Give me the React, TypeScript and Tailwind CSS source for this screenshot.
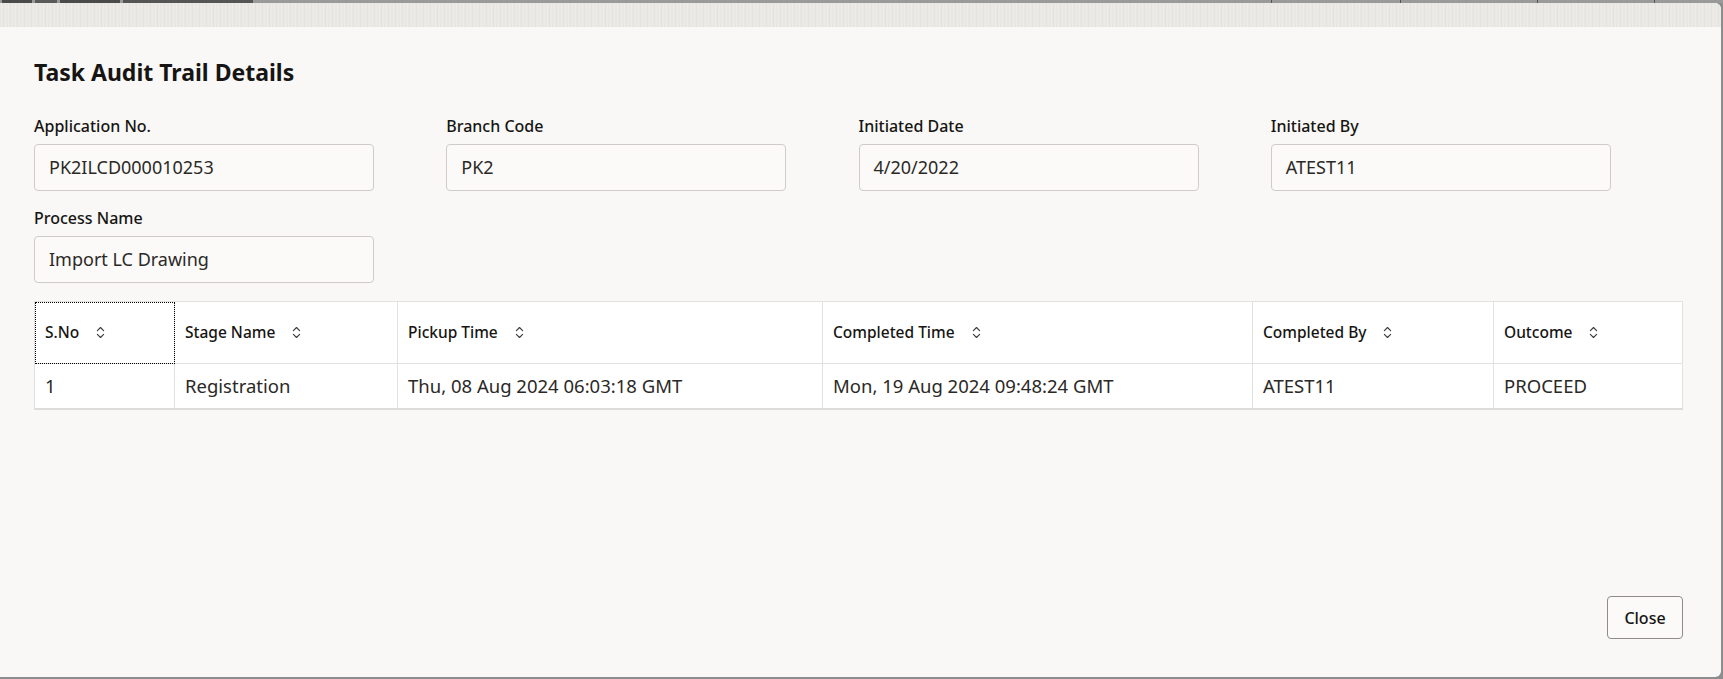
import { ChevronsUpDown } from 'lucide-react';

type Field = { label: string; value: string };

const FIELDS: Field[] = [
  { label: 'Application No.', value: 'PK2ILCD000010253' },
  { label: 'Branch Code', value: 'PK2' },
  { label: 'Initiated Date', value: '4/20/2022' },
  { label: 'Initiated By', value: 'ATEST11' },
  { label: 'Process Name', value: 'Import LC Drawing' },
];

const COLUMNS = [
  { title: 'S.No', width: 'w-[140px]' },
  { title: 'Stage Name', width: 'w-[223px]' },
  { title: 'Pickup Time', width: 'w-[425px]' },
  { title: 'Completed Time', width: 'w-[430px]' },
  { title: 'Completed By', width: 'w-[241px]' },
  { title: 'Outcome', width: '' },
];

const ROWS = [
  [
    '1',
    'Registration',
    'Thu, 08 Aug 2024 06:03:18 GMT',
    'Mon, 19 Aug 2024 09:48:24 GMT',
    'ATEST11',
    'PROCEED',
  ],
];

function FormField({ label, value }: Field) {
  return (
    <div className="flex flex-col">
      <label className="h-[20px] text-[16px] leading-[20px] font-medium text-[#161513]">
        {label}
      </label>
      <div className="mt-[8px] flex h-[47px] w-[340px] items-center rounded-[4px] border border-[#cfccc8] bg-[#fbfaf9] pl-[14px] text-[18px] text-[#2b2926]">
        {value}
      </div>
    </div>
  );
}

export default function App() {
  return (
    <div
      className="flex h-[679px] w-full flex-col overflow-hidden bg-[#8d8d8d]"
      style={{ fontFamily: '"Noto Sans", "Open Sans", sans-serif' }}
    >
      {/* bits of the page behind the overlay */}
      <div className="flex h-[3px] items-stretch justify-between overflow-hidden bg-[#9a9a9a]">
        <div className="flex gap-[3px] pl-[2px]">
          <span className="w-[30px] bg-[#4a4a4a]" />
          <span className="w-[22px] bg-[#5a5a5a]" />
          <span className="w-[60px] bg-[#4a4a4a]" />
          <span className="w-[130px] bg-[#555]" />
        </div>
        <div className="mr-[68px] flex">
          <span className="w-[130px] border-x border-[#555]" />
          <span className="w-[137px] border-r border-[#555]" />
          <span className="w-[117px] border-r border-[#555]" />
        </div>
      </div>

      <div className="flex h-[674px] w-[1721px] flex-col overflow-hidden rounded-r-[6px] bg-[#f9f8f6]">
        <div className="h-[24px] shrink-0 bg-[repeating-linear-gradient(90deg,#e6e4e1_0px,#f1efec_2px,#e2e0dd_3px,#eeece9_5px,#e8e6e3_7px)]" />

        <div className="flex flex-1 flex-col pt-[29px] pr-[38px] pl-[34px] pb-[38px]">
          <h2 className="h-[32px] text-[23px] leading-[32px] font-bold text-[#161513]">
            Task Audit Trail Details
          </h2>

          <div className="mt-[28px] grid grid-cols-4 gap-y-[17px]">
            {FIELDS.map((f) => (
              <FormField key={f.label} {...f} />
            ))}
          </div>

          <table className="mt-[18px] w-full table-fixed border-collapse border-b-2 border-[#dedcd9] bg-white">
            <colgroup>
              {COLUMNS.map((c) => (
                <col key={c.title} className={c.width} />
              ))}
            </colgroup>
            <thead>
              <tr className="h-[62px]">
                {COLUMNS.map((c, i) => (
                  <th
                    key={c.title}
                    className={`border border-[#e3e1de] pl-[10px] text-left text-[15.5px] font-medium text-[#161513] ${
                      i === 0 ? 'outline-1 -outline-offset-1 outline-black outline-dotted' : ''
                    }`}
                  >
                    <span className="inline-flex items-center gap-[14px]">
                      {c.title}
                      <ChevronsUpDown size={15} strokeWidth={1.8} className="text-[#3d3b38]" />
                    </span>
                  </th>
                ))}
              </tr>
            </thead>
            <tbody>
              {ROWS.map((row) => (
                <tr key={row[0]} className="h-[45px]">
                  {row.map((cell, i) => (
                    <td
                      key={i}
                      className="border-x border-[#e3e1de] pl-[10px] text-[18.5px] text-[#2b2926]"
                    >
                      {cell}
                    </td>
                  ))}
                </tr>
              ))}
            </tbody>
          </table>

          <div className="mt-auto flex justify-end">
            <button
              type="button"
              className="h-[43px] w-[76px] rounded-[4px] border border-[#8f8c88] bg-[#fbfaf9] text-[16px] font-medium text-[#161513]"
            >
              Close
            </button>
          </div>
        </div>
      </div>
    </div>
  );
}
